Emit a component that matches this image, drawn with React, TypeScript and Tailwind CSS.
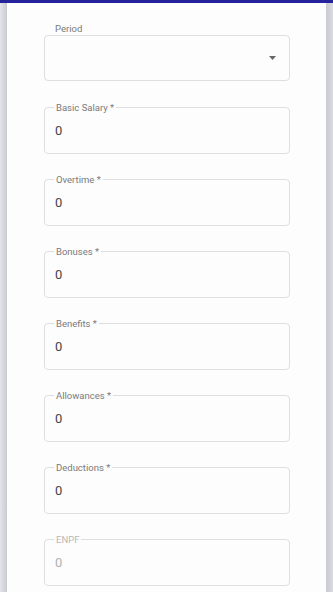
const fields = [
  { label: "Basic Salary *", value: "0" },
  { label: "Overtime *", value: "0" },
  { label: "Bonuses *", value: "0" },
  { label: "Benefits *", value: "0" },
  { label: "Allowances *", value: "0" },
  { label: "Deductions *", value: "0" },
  { label: "ENPF", value: "0", disabled: true },
]

function OutlinedField({ label, value, disabled }: { label: string; value: string; disabled?: boolean }) {
  return (
    <fieldset className="m-0 rounded-[4px] border border-[#dedee2] px-[10px] pb-[5px] pt-0">
      <legend className={`ml-[-1px] px-[2px] text-[9.5px] leading-[11px] ${disabled ? "text-[#b8b8b8]" : "text-[#7a7a7a]"}`}>
        {label}
      </legend>
      <div className={`flex h-[35px] items-center text-[13px] ${disabled ? "text-[#b0b0b0]" : "text-[#444444]"}`}>
        {value}
      </div>
    </fieldset>
  )
}

export default function App() {
  return (
    <div className="flex h-[592px] w-full flex-col overflow-hidden bg-white" style={{ fontFamily: "Roboto, 'Liberation Sans', sans-serif" }}>
      <div className="h-[3px] w-full bg-[#24239b]" />
      <div className="flex flex-1">
        <div className="w-[7px] bg-gradient-to-r from-[#e4e4ea] to-[#c9c9d2]" />
        <div className="flex flex-1 flex-col gap-[20px] bg-[#fdfdfd] pl-[37px] pr-[36px] pt-[20px]">
          <div className="mb-[1px] flex flex-col">
            <span className="pl-[11px] text-[9.5px] leading-[11px] text-[#7a7a7a]">Period</span>
            <div className="mt-[1px] flex h-[46px] items-center justify-end rounded-[4px] border border-[#dedee2] pr-[13px]">
              <svg width="7" height="4" viewBox="0 0 7 4">
                <path d="M0 0h7L3.5 4z" fill="#666" />
              </svg>
            </div>
          </div>
          {fields.map((f) => (
            <OutlinedField key={f.label} label={f.label} value={f.value} disabled={f.disabled} />
          ))}
        </div>
        <div className="w-[7px] bg-gradient-to-r from-[#c9c9d2] to-[#dadae0]" />
      </div>
    </div>
  )
}
